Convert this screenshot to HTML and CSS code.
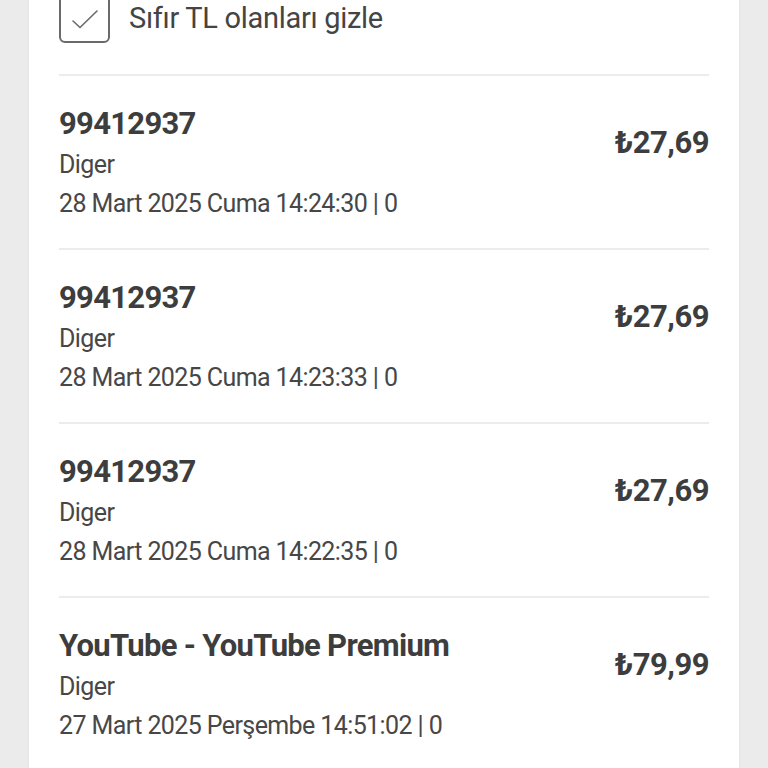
FILE: index.html
```html
<!DOCTYPE html>
<html lang="tr">
<head>
<meta charset="utf-8">
<title>Hareketler</title>
<link rel="stylesheet" href="styles.css">
</head>
<body>
<div class="page">
  <main class="card">
    <label class="filter">
      <span class="checkbox">
        <svg width="51" height="51" viewBox="0 0 51 51" aria-hidden="true">
          <polyline points="14,29 21,35.5 38,19" fill="none" stroke="#6a6a6a" stroke-width="1.6" stroke-linecap="round" stroke-linejoin="round"/>
        </svg>
      </span>
      <span class="filter-label">Sıfır TL olanları gizle</span>
    </label>

    <ul class="list">
      <li class="row">
        <div class="info">
          <div class="title">99412937</div>
          <div class="sub">Diger</div>
          <div class="date">28 Mart 2025 Cuma 14:24:30 | 0</div>
        </div>
        <div class="price">₺27,69</div>
      </li>
      <li class="row">
        <div class="info">
          <div class="title">99412937</div>
          <div class="sub">Diger</div>
          <div class="date">28 Mart 2025 Cuma 14:23:33 | 0</div>
        </div>
        <div class="price">₺27,69</div>
      </li>
      <li class="row">
        <div class="info">
          <div class="title">99412937</div>
          <div class="sub">Diger</div>
          <div class="date">28 Mart 2025 Cuma 14:22:35 | 0</div>
        </div>
        <div class="price">₺27,69</div>
      </li>
      <li class="row">
        <div class="info">
          <div class="title">YouTube - YouTube Premium</div>
          <div class="sub">Diger</div>
          <div class="date">27 Mart 2025 Perşembe 14:51:02 | 0</div>
        </div>
        <div class="price">₺79,99</div>
      </li>
    </ul>
  </main>
</div>
</body>
</html>
```

FILE: styles.css
```css
* { box-sizing: border-box; }

html, body {
  margin: 0;
  padding: 0;
  background: #ebebeb;
  height: 100%;
  overflow: hidden;
}

body {
  font-family: Roboto, "Liberation Sans", sans-serif;
  color: #444444;
}

.page {
  padding: 0 29px;
  min-height: 100%;
}

.card {
  background: #ffffff;
  min-height: 800px;
  padding: 0 30px;
  box-shadow: 0 0 2px rgba(0, 0, 0, 0.06);
}

.filter {
  display: flex;
  align-items: center;
  gap: 19px;
  margin-top: -8px;
  padding-bottom: 31px;
  border-bottom: 2px solid #ececec;
}

.checkbox {
  width: 51px;
  height: 51px;
  border: 2px solid #6a6a6a;
  border-radius: 6px;
  flex: none;
  position: relative;
}

.checkbox svg {
  position: absolute;
  left: -2px;
  top: -2px;
}

.filter-label {
  font-size: 29px;
  line-height: 40px;
  letter-spacing: -0.3px;
  color: #444444;
}

.list {
  list-style: none;
  margin: 0;
  padding: 0;
}

.row {
  display: flex;
  justify-content: space-between;
  align-items: flex-start;
  padding: 28px 0 25px;
  border-bottom: 2px solid #ececec;
}

.title {
  font-weight: 700;
  font-size: 31px;
  line-height: 40px;
  letter-spacing: -0.7px;
  color: #3d3d3d;
}

.sub, .date {
  font-size: 25px;
  line-height: 39px;
  letter-spacing: -0.6px;
  color: #474747;
}

.sub { margin-top: 1px; }

.price {
  margin-top: 19px;
  font-weight: 700;
  font-size: 31px;
  line-height: 40px;
  letter-spacing: -0.5px;
  color: #3d3d3d;
}
```
